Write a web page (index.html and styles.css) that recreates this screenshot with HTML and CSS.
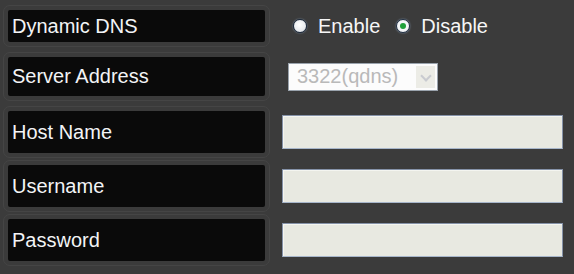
FILE: index.html
```html
<!DOCTYPE html>
<html lang="en">
<head>
    <meta charset="UTF-8">
    <title>Dynamic DNS</title>
    <link rel="stylesheet" href="styles.css">
</head>
<body>
    <div id="form">
        <div class="row row-ddns">
            <div class="label">Dynamic DNS</div>
            <div class="value radios">
                <span class="radio off"></span><span class="radio-text">Enable</span>
                <span class="radio on"></span><span class="radio-text">Disable</span>
            </div>
        </div>
        <div class="row row-server">
            <div class="label">Server Address</div>
            <div class="value">
                <span class="select">
                    <span class="select-text">3322(qdns)</span>
                    <span class="select-arrow"></span>
                </span>
            </div>
        </div>
        <div class="row">
            <div class="label">Host Name</div>
            <div class="value"><span class="input"></span></div>
        </div>
        <div class="row">
            <div class="label">Username</div>
            <div class="value"><span class="input"></span></div>
        </div>
        <div class="row">
            <div class="label">Password</div>
            <div class="value"><span class="input"></span></div>
        </div>
    </div>
</body>
</html>
```
FILE: styles.css
```css
*{
    margin: 0px;
    padding: 0px;
    box-sizing: border-box;
}
body{
    background: #3b3b3b;
    font-family: "Liberation Sans", Arial, sans-serif;
    font-size: 20px;
}
#form{
    padding: 10px 0 0 8px;
}
.row{
    display: flex;
    align-items: center;
    height: 42px;
    margin-bottom: 12px;
}
.row-ddns{
    height: 32px;
    margin-bottom: 15px;
}
.row-server{
    height: 39px;
    margin-bottom: 15px;
}
.label{
    width: 257px;
    height: 100%;
    background: #0a0a0a;
    color: #f3f4f6;
    display: flex;
    align-items: center;
    padding-left: 4px;
    border-radius: 2px;
    outline: 1px solid #454545;
    outline-offset: 4px;
}
.value{
    margin-left: 17px;
    display: flex;
    align-items: center;
}
/* radio buttons */
.radios{
    padding-left: 11px;
    color: #f6f6f6;
}
.radio{
    width: 14px;
    height: 14px;
    border-radius: 50%;
    border: 1px solid #1d2b3d;
    box-shadow: 0 0 2px #7d8ea4;
    position: relative;
    margin-right: 11px;
}
.radio.off{
    background: radial-gradient(circle at 45% 40%, #ffffff, #d9dde3);
}
.radio.on{
    background: #f4f6f8;
    margin-left: 16px;
}
.radio.on::after{
    content: "";
    position: absolute;
    width: 6px;
    height: 6px;
    border-radius: 50%;
    background: #20a03a;
    left: 3px;
    top: 3px;
}
/* disabled select */
.select{
    margin-left: 6px;
    width: 150px;
    height: 28px;
    background: #fcfcfc;
    border: 1px solid #9aa3ad;
    display: flex;
    align-items: center;
    justify-content: space-between;
    padding: 0 2px 0 8px;
}
.select-text{
    color: #b9b9b9;
}
.select-arrow{
    width: 19px;
    height: 22px;
    background: #ecece6;
    position: relative;
}
.select-arrow::after{
    content: "";
    position: absolute;
    width: 6px;
    height: 6px;
    border-right: 2px solid #c9cbd0;
    border-bottom: 2px solid #c9cbd0;
    transform: rotate(45deg);
    left: 6px;
    top: 6px;
}
/* text inputs */
.input{
    display: block;
    width: 281px;
    height: 34px;
    background: #e8e9e1;
    border: 1px solid #8592a8;
    border-bottom-color: #a7b6ca;
    box-shadow: inset 1px 1px 0 #f4f5f0;
}
```
